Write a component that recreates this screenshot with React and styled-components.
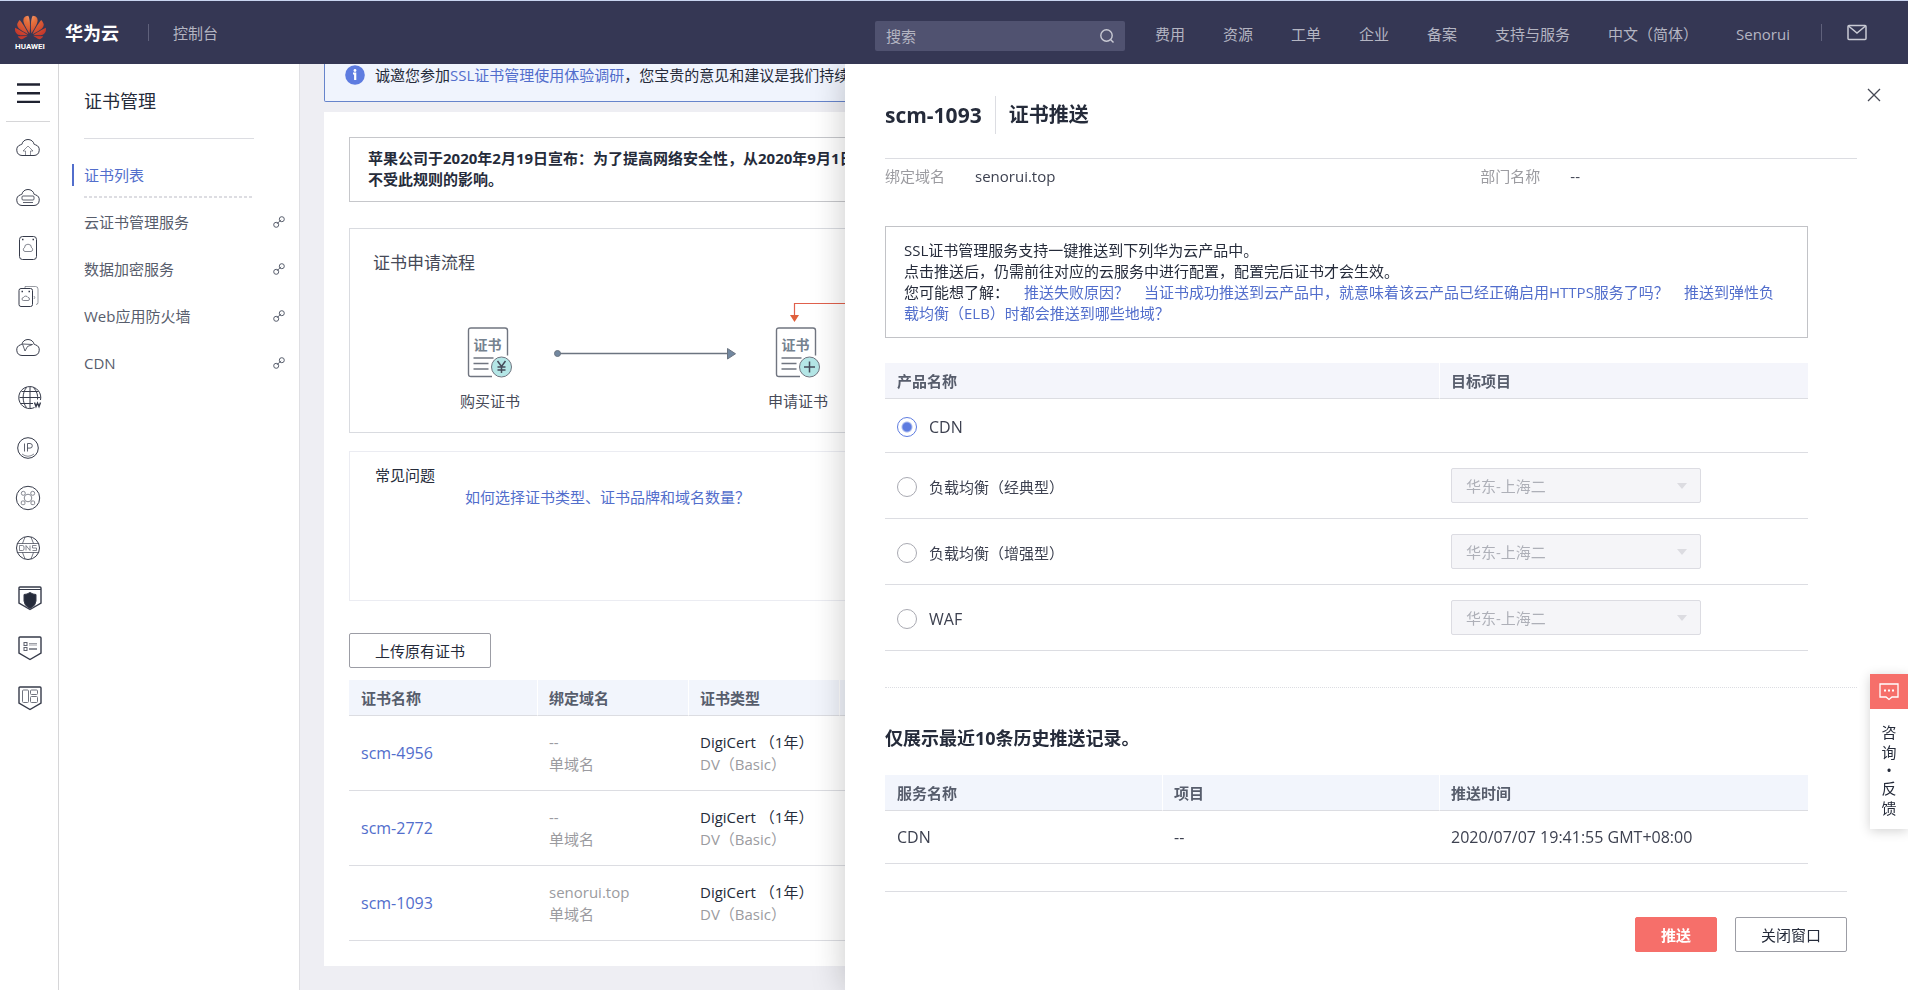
import React, { useState } from "react";
import styled, { createGlobalStyle, css } from "styled-components";

const color = {
  navy: "#353754",
  ink: "#252b3a",
  body: "#3d4150",
  soft: "#575d6c",
  mute: "#9b9ba0",
  link: "#526ecc",
  line: "#dcdde2",
  red: "#f66f6a",
};

const GlobalStyle = createGlobalStyle`
  * { box-sizing: border-box; }
  body {
    margin: 0;
    background: #eeeef3;
    color: ${color.ink};
    font: 15px/22px "Open Sans", "Noto Sans CJK SC", sans-serif;
  }
  button, input, select { font: inherit; color: inherit; }
  h1, h2, p, ul { margin: 0; padding: 0; }
  ul { list-style: none; }
  a { color: inherit; text-decoration: none; }
`;

/* ---------- page frame ---------- */

const Page = styled.div`
  display: flex;
  flex-direction: column;
  height: 100vh;
  overflow: hidden;
`;

const Header = styled.header`
  position: relative;
  z-index: 3;
  display: flex;
  align-items: center;
  flex: none;
  height: 64px;
  padding: 0 40px 0 14px;
  border-top: 1px solid #c9d4f0;
  background: ${color.navy};
  color: #b4b5c2;
`;

const Body = styled.div`
  display: flex;
  flex: 1;
  min-height: 0;
`;

/* ---------- header ---------- */

const Brand = styled.a`
  display: flex;
  align-items: center;
  gap: 18px;
  color: #fff;
  font-size: 18px;
  font-weight: 700;
`;

const Separator = styled.span`
  width: 1px;
  height: 17px;
  margin: 0 24px 0 ${(p) => p.$before}px;
  background: #5f617b;
`;

const Search = styled.label`
  display: flex;
  align-items: center;
  width: 250px;
  height: 30px;
  margin: 6px 30px 0 auto;
  padding: 0 10px 0 11px;
  border-radius: 2px;
  background: #505270;

  input {
    flex: 1;
    min-width: 0;
    padding: 0;
    border: 0;
    outline: 0;
    background: none;
  }
  input::placeholder { color: #b4b5c2; opacity: 1; }
`;

const TopNav = styled.nav`
  display: flex;
  align-items: center;
  gap: 38px;
  padding-top: 2px;
  white-space: nowrap;
`;

const IconButton = styled.button`
  display: flex;
  padding: 0;
  border: 0;
  background: none;
  cursor: pointer;
`;

function Logo() {
  const half = (
    <>
      <path d="M3.67 6.14S1.82 7.91 1.72 9.78v.35c.08 1.51 1.22 2.4 1.22 2.4 1.83 1.79 6.26 4.04 7.3 4.55 0 0 .06.03.1-.01l.02-.04v-.04C7.52 10.8 3.67 6.14 3.67 6.14z" />
      <path d="M9.65 18.6c-.02-.08-.1-.08-.1-.08l-7.38.26c.8 1.43 2.15 2.53 3.56 2.2.96-.25 3.16-1.78 3.88-2.3.06-.05.04-.08.04-.08z" />
      <path d="M9.73 17.82C6.49 15.63.21 12.28.21 12.28c-.15.46-.2.9-.21 1.3v.07c0 1.07.4 1.82.4 1.82.8 1.69 2.34 2.2 2.34 2.2.7.3 1.4.31 1.4.31.12.02 4.4 0 5.54 0 .05 0 .08-.05.08-.05v-.06c0-.03-.03-.05-.03-.05z" />
      <path d="M9.06 3.19a3.42 3.42 0 0 0-2.57 3.15v.41c.03.6.16 1.05.16 1.05.66 2.9 3.86 7.65 4.55 8.65.05.05.1.03.1.03a.1.1 0 0 0 .06-.1c1.06-10.6-1.11-13.42-1.11-13.42-.32.02-1.19.23-1.19.23z" />
    </>
  );
  return (
    <svg width="33" height="36" viewBox="0 0 33 36" aria-label="HUAWEI">
      <defs>
        <radialGradient id="petal" gradientUnits="userSpaceOnUse" cx="13" cy="3" r="17">
          <stop offset="0" stopColor="#f6a27a" />
          <stop offset="0.35" stopColor="#e5703c" />
          <stop offset="1" stopColor="#c63a2c" />
        </radialGradient>
      </defs>
      <g transform="translate(1 -3) scale(1.29)" fill="url(#petal)">
        {half}
        <g transform="translate(24 0) scale(-1 1)">{half}</g>
      </g>
      <text x="16" y="34" textAnchor="middle" fontSize="8" fontWeight="700" fill="#fff" fontFamily="Roboto, sans-serif">
        HUAWEI
      </text>
    </svg>
  );
}

/* ---------- icon rail ---------- */

const Rail = styled.nav`
  display: flex;
  flex-direction: column;
  align-items: center;
  flex: none;
  width: 59px;
  padding: 19px 2px 0 0;
  border-right: 1px solid #d6d6d8;
  background: #fff;
`;

const RailToggle = styled(IconButton)`
  justify-content: center;
  width: 44px;
  height: 39px;
  border-bottom: 1px solid #d6d6d8;
`;

const RailList = styled.ul`
  display: flex;
  flex-direction: column;
  gap: 22px;
  margin-top: 12px;

  a { display: block; height: 28px; }
  svg { overflow: visible; }
`;

const cloud = "M8 21.500a5.500 5.500 0 0 1-1.500-10.700c.6-.3 1-.2 1.300-.4C8.500 7.300 11 5.500 14 5.500s5.500 1.800 6.200 4.900c.3.200.7.100 1.300.4A5.500 5.500 0 0 1 20 21.500z";
const shield = "M6 3h20q1 0 1 1v15l-11 6.500L5 19V4q0-1 1-1z";

const railIcons = [
  ["云服务器", <><path d={cloud} /><path opacity=".55" d="M14 12l5 5h-2.500v4.500M14 12l-5 5h2.500v4.500" /></>],
  ["云硬盘", <><path d={cloud} /><rect opacity=".8" x="8" y="12" width="12" height="4" rx="1" /><path opacity=".8" d="M9 18.500h10" /></>],
  ["存储", <><rect x="5.500" y="2.500" width="17" height="23" rx="3" /><path strokeWidth="1.500" d="M8 5.500h1.500M18.500 5.500H20" /><path opacity=".6" d="M11 17.500a2 2 0 0 1-.5-3.800 3.500 3.500 0 0 1 7 0 2 2 0 0 1-.5 3.800z" /></>],
  ["存储库", <><path opacity=".5" d="M11 4V2.500h10.500q2.500 0 2.500 2.500v13.500q0 2-2 2" /><rect x="5" y="4.500" width="13.500" height="18" rx="2" /><path strokeWidth="1.500" d="M7.500 7.500H9M14.500 7.500H16" /><path opacity=".6" d="M9.500 16.500a1.500 1.500 0 0 1 0-3 2.500 2.500 0 0 1 4.500 0 1.500 1.500 0 0 1 0 3z" /><path opacity=".5" d="M20 12q1.500 1.500 0 3" /></>],
  ["专线", <><path d={cloud} /><path opacity=".8" d="M8.500 10l2.500 7M8.500 10l10 .5-5 2L11 17" /></>],
  ["广域网", <><path d="M20.500 23.500A11 11 0 1 1 26.500 16M5.500 13.500h21M7 19.500h12M7.500 7.500h17M16 2.500v22M12.500 3.500C8 9 8 18 12.500 23.500M19.500 3.500c3.500 4 4.500 8 4 12" /><path strokeWidth="1.400" d="M20.500 18.500l1.500 4 1.500-3.500 1.500 3.500 1.500-4" /></>],
  ["弹性公网", <><circle cx="14" cy="14" r="10.300" /><path opacity=".8" d="M10.500 9.500v8M13.500 17.500v-8h2.500a2.300 2.300 0 0 1 0 4.600h-2.500" /><path opacity=".6" d="M8 20q6 4.500 12 0" /></>],
  ["均衡", <><circle cx="14" cy="14" r="11.700" /><g opacity=".6"><circle cx="14" cy="14" r="3.800" /><circle cx="9.300" cy="9.300" r="2" /><circle cx="18.700" cy="9.300" r="2" /><rect x="7.300" y="17" width="3.600" height="3.600" rx="1" /><rect x="17" y="17" width="3.600" height="3.600" rx="1" /></g></>],
  ["域名解析", <><circle cx="14" cy="14" r="11.500" /><path opacity=".7" d="M3 9.500h22M3 18.500h22M11 3L8.500 9.500M17 3l2.500 6.500M8.500 18.500L11 25M19.500 18.500L17 25" /><path opacity=".6" d="M5.500 11.500h3q1.500 0 1.500 1.500v2q0 1.500-1.500 1.500h-3zM12 16.500v-5l4 5v-5M22.500 11.500H18.500v2.500h4v2.500h-4" /></>],
  ["证书", <><path strokeWidth="1.400" d={shield} /><path d="M5 5.500h22" /><path fill="#252b3a" d="M16 8.500q3 2 6 2V17q0 4.500-6 7.500-6-3-6-7.500v-6.500q3 0 6-2z" /></>],
  ["审计", <><path strokeWidth="1.400" d={shield} /><g opacity=".8"><rect x="10" y="8.500" width="3" height="3" /><rect x="10" y="13.500" width="3" height="3" /><path d="M15 9.500h8M15 11h8" opacity=".6" /><path strokeWidth="1.400" d="M15 15h8" /></g></>],
  ["防护", <><path strokeWidth="1.400" d={shield} /><g opacity=".7"><rect x="8.500" y="6" width="6" height="12.500" rx="1" /><rect x="16.500" y="6" width="7" height="4.500" rx="1" /><rect x="16.500" y="12.500" width="7" height="6" rx="1" /></g></>],
];

/* ---------- side menu ---------- */

const SideMenu = styled.nav`
  flex: none;
  width: 241px;
  padding: 25px 14px 0 0;
  border-right: 1px solid #dfdfe3;
  background: #fff;
`;

const SideTitle = styled.h2`
  margin: 0 31px 25px 25px;
  padding-bottom: 24px;
  border-bottom: 1px solid ${color.line};
  font-size: 18px;
  font-weight: 400;
  line-height: 25px;
`;

const SideItem = styled.a`
  display: flex;
  align-items: center;
  justify-content: space-between;
  height: 22px;
  margin-left: 25px;
  margin-bottom: 25px;
  color: ${color.soft};

  ${(p) =>
    p.$active &&
    css`
      margin-left: 13px;
      margin-bottom: 10px;
      padding-left: 10px;
      border-left: 2px solid ${color.link};
      color: ${color.link};
    `}
`;

const SideDash = styled.hr`
  height: 2px;
  margin: 0 31px 13px 25px;
  border: 0;
  background: repeating-linear-gradient(90deg, #dddde2 0 3px, #fff 3px 5px);
`;

function LinkIcon() {
  return (
    <svg width="12" height="14" viewBox="0 0 12 14" fill="none" stroke="#575d6c">
      <circle cx="3.200" cy="9.800" r="2.500" />
      <circle cx="8.800" cy="4.200" r="2.500" />
      <path d="M4 8.800l4-4" />
    </svg>
  );
}

/* ---------- main column ---------- */

const Main = styled.main`
  flex: 1;
  min-width: 0;
  padding: 0 24px;
  overflow: hidden;
`;

const Notice = styled.div`
  display: flex;
  align-items: center;
  gap: 10px;
  margin-bottom: 10px;
  padding: 0 20px 15px;
  border: solid #6684cb;
  border-width: 0 1px 1px;
  border-radius: 0 0 2px 2px;
  background: #f0f4fd;
  white-space: nowrap;

  a { color: ${color.link}; }
`;

const Card = styled.section`
  padding: 25px;
  background: #fff;
`;

const Bulletin = styled.p`
  margin-bottom: 26px;
  padding: 10px 18px 11px;
  border: 1px solid #c6c7cb;
  font-weight: 700;
  line-height: 21px;
  white-space: nowrap;
`;

const Process = styled.div`
  height: 205px;
  margin-bottom: 18px;
  padding: 23px;
  border: 1px solid #d9dbe0;
  overflow: hidden;
  color: #464a58;

  h2 { margin-bottom: 52px; font-size: 17px; font-weight: 400; }
`;

const Steps = styled.div`
  display: flex;
  gap: 32px;
  padding-left: 87px;
`;

const Step = styled.div`
  position: relative;
  display: flex;
  flex-direction: column;
  align-items: center;
  gap: 12px;
  width: 60px;
  white-space: nowrap;
`;

const ReturnLine = styled.svg`
  position: absolute;
  top: -25px;
  left: 22px;
`;

function Certificate({ children }) {
  return (
    <svg width="48" height="52" viewBox="0 0 48 52" fill="none" stroke="#707580">
      <path strokeWidth="1.400" d="M26 50.500H5q-2.500 0-2.500-2.500V4.500Q2.500 2 5 2h34q2.500 0 2.500 2.500v25" />
      <path strokeWidth="1.400" d="M7.500 32h20M7.500 37.500h15M7.500 43h15" />
      <text x="21.500" y="24" textAnchor="middle" fontSize="14" fontWeight="700" fill="#75828f" stroke="none">
        证书
      </text>
      <circle cx="35.500" cy="41" r="10" fill="#b4e6e6" />
      <g stroke="#454b5a" strokeWidth="1.500">{children}</g>
    </svg>
  );
}

const Faq = styled.div`
  height: 150px;
  margin-bottom: 32px;
  padding: 12px 25px;
  border: 1px solid #ebecf2;

  a { display: block; margin-left: 90px; color: ${color.link}; }
`;

const Button = styled.button`
  height: 35px;
  padding: 0 25px;
  border: 1px solid ${(p) => (p.$primary ? color.red : "#9c9da5")};
  border-radius: 2px;
  background: ${(p) => (p.$primary ? color.red : "#fff")};
  color: ${(p) => (p.$primary ? "#fff" : color.ink)};
  font-weight: ${(p) => (p.$primary ? 700 : 400)};
  cursor: pointer;
`;

const Table = styled.table`
  width: ${(p) => p.$width || "100%"};
  border-collapse: separate;
  border-spacing: 0;
  table-layout: fixed;
  text-align: left;

  th, td { padding: 0 0 0 12px; border-bottom: 1px solid ${color.line}; }
  th {
    height: 36px;
    background: #f2f5fc;
    color: ${color.soft};
    font-weight: 600;
  }
  th + th { padding-left: 11px; border-left: 1px solid #fff; }
  td { height: ${(p) => p.$row}px; }
`;

const CertTable = styled(Table)`
  margin-top: 12px;
  a { color: ${color.link}; }
`;

/* Latin-only names and timestamps run one size up beside the Chinese text */
const Latin = styled.span`
  font-size: 16px;
`;

const Muted = styled.div`
  color: ${color.mute};
`;

/* ---------- drawer ---------- */

const Drawer = styled.aside`
  position: fixed;
  z-index: 2;
  top: 64px;
  right: 0;
  bottom: 0;
  left: 845px;
  padding: 32px 51px 0 40px;
  background: #fff;
  box-shadow: 0 0 32px rgba(0, 0, 0, 0.22);
  overflow: hidden;
`;

const DrawerClose = styled(IconButton)`
  position: absolute;
  top: 24px;
  right: 27px;
`;

const DrawerTitle = styled.h1`
  display: flex;
  margin-bottom: 24px;
  font-size: 21px;
  font-weight: 700;
  line-height: 38px;

  span + span {
    margin-left: 13px;
    padding-left: 13px;
    border-left: 1px solid ${color.line};
    font-size: 20px;
  }
`;

const Facts = styled.dl`
  display: grid;
  grid-template-columns: 49fr 31fr;
  margin: 0 0 39px;
  padding-top: 6px;
  border-top: 1px solid ${color.line};

  div { display: flex; gap: 30px; }
  dt { color: ${color.mute}; }
  dd { margin: 0; color: ${color.body}; }
`;

const Tips = styled.div`
  width: 95%;
  margin-bottom: 25px;
  padding: 13px 19px 13px 18px;
  border: 1px solid #c2c3c7;
  line-height: 21px;

  a { margin-left: 15px; color: ${color.link}; }
`;

const ProductTable = styled(Table)`
  th { background: #f4f5fb; }
  th:first-child { width: 60%; }
  tr:first-child td { height: 54px; }
`;

const RadioLabel = styled.label`
  display: flex;
  align-items: center;
  gap: 12px;
  padding-top: 2px;
  color: ${color.body};
`;

const Radio = styled.input`
  width: 20px;
  height: 20px;
  margin: 0;
  appearance: none;
  border: 1px solid #a9aab2;
  border-radius: 50%;
  background: #fff;

  &:checked {
    border-color: #5e7ce0;
    background: radial-gradient(circle, #5e7ce0 0 4px, #fff 6px);
  }
`;

const SelectBox = styled.span`
  display: grid;
  align-items: center;
  width: 250px;

  select, svg { grid-area: 1 / 1; }
  svg { justify-self: end; margin-right: 14px; }
  select {
    height: 35px;
    padding: 0 14px;
    appearance: none;
    border: 1px solid #dcdce2;
    border-radius: 2px;
    background: #f5f5f8;
    color: #aeb0b8;
    opacity: 1;
  }
`;

const Dotted = styled.hr`
  margin: 36px 0 37px;
  border: 0;
  border-top: 1px dotted #dcdde2;
`;

const HistoryTitle = styled.h2`
  margin-bottom: 24px;
  font-size: 18px;
  font-weight: 700;
  line-height: 26px;
`;

const HistoryTable = styled(Table)`
  color: ${color.body};
  th:nth-child(-n + 2) { width: 30%; }
`;

const DrawerFooter = styled.footer`
  display: flex;
  justify-content: flex-end;
  gap: 18px;
  margin: 27px 10px 0 0;
  padding-top: 25px;
  border-top: 1px solid ${color.line};
`;

/* ---------- feedback tab ---------- */

const Feedback = styled.a`
  position: fixed;
  z-index: 4;
  top: 674px;
  right: 0;
  width: 38px;
  padding-bottom: 11px;
  background: #fff;
  box-shadow: 0 2px 12px rgba(0, 0, 0, 0.18);
  text-align: center;
  line-height: 20px;

  svg { display: block; margin-bottom: 13px; padding: 8px 9px; width: 100%; height: 35px; background: ${color.red}; }
  span { display: block; }
  i { display: block; font-style: normal; line-height: 16px; }
`;

/* ---------- data ---------- */

const topLinks = ["费用", "资源", "工单", "企业", "备案", "支持与服务", "中文（简体）", "Senorui"];
const sideLinks = ["云证书管理服务", "数据加密服务", "Web应用防火墙", "CDN"];
const certificates = [
  { name: "scm-4956", domain: "--" },
  { name: "scm-2772", domain: "--" },
  { name: "scm-1093", domain: "senorui.top" },
];
const products = [
  { name: "CDN", latin: true },
  { name: "负载均衡（经典型）", region: "华东-上海二" },
  { name: "负载均衡（增强型）", region: "华东-上海二" },
  { name: "WAF", latin: true, region: "华东-上海二" },
];

export default function App() {
  const [product, setProduct] = useState("CDN");

  return (
    <Page>
      <GlobalStyle />
      <Header>
        <Brand href="#">
          <Logo />
          华为云
        </Brand>
        <Separator $before={29} />
        <a href="#">控制台</a>
        <Search>
          <input type="text" placeholder="搜索" aria-label="搜索" />
          <svg width="16" height="16" viewBox="0 0 16 16" fill="none" stroke="#c9cad4" strokeWidth="1.400">
            <circle cx="7.500" cy="7.500" r="5.700" />
            <path d="M11.500 11.500l3 3" />
          </svg>
        </Search>
        <TopNav>
          {topLinks.map((t) => (
            <a href="#" key={t}>{t}</a>
          ))}
        </TopNav>
        <Separator $before={31} />
        <IconButton aria-label="消息">
          <svg width="22" height="18" viewBox="0 0 22 18" fill="none" stroke="#c9cad4" strokeWidth="1.500">
            <rect x="2" y="1.500" width="18" height="14" rx="1" />
            <path d="M2.500 2l8.500 7 8.500-7" />
          </svg>
        </IconButton>
      </Header>

      <Body>
        <Rail>
          <RailToggle aria-label="展开菜单">
            <svg width="23" height="20" viewBox="0 0 23 20" stroke="#1f2230" strokeWidth="2.500">
              <path d="M0 1.500h23M0 10.200h23M0 19h23" />
            </svg>
          </RailToggle>
          <RailList>
            {railIcons.map(([name, art]) => (
              <li key={name}>
                <a href="#" aria-label={name}>
                  <svg width="28" height="28" viewBox="0 0 28 28" fill="none" stroke="#363b4a">
                    {art}
                  </svg>
                </a>
              </li>
            ))}
          </RailList>
        </Rail>

        <SideMenu>
          <SideTitle>证书管理</SideTitle>
          <SideItem href="#" $active>证书列表</SideItem>
          <SideDash />
          {sideLinks.map((t) => (
            <SideItem href="#" key={t}>
              {t}
              <LinkIcon />
            </SideItem>
          ))}
        </SideMenu>

        <Main>
          <Notice>
            <svg width="20" height="22" viewBox="0 0 20 22">
              <circle cx="10" cy="11" r="9.800" fill="#5e7ce0" />
              <circle cx="10" cy="6.500" r="1.400" fill="#fff" />
              <path d="M8 9.500h2.200V16" fill="none" stroke="#fff" strokeWidth="2.200" />
            </svg>
            <span>
              诚邀您参加<a href="#">SSL证书管理使用体验调研</a>，您宝贵的意见和建议是我们持续
            </span>
          </Notice>
          <Card>
            <Bulletin>
              苹果公司于2020年2月19日宣布：为了提高网络安全性，从2020年9月1日
              <br />
              不受此规则的影响。
            </Bulletin>
            <Process>
              <h2>证书申请流程</h2>
              <Steps>
                <Step>
                  <Certificate>
                    <path fill="none" d="M31.500 35l4 5.500 4-5.500M35.500 40.500V47M31.500 41h8M31.500 44h8" />
                  </Certificate>
                  购买证书
                </Step>
                <svg width="184" height="52" viewBox="0 0 184 52" stroke="#6b7480">
                  <path strokeWidth="1.500" d="M5 27.500h170" />
                  <circle cx="5.500" cy="27.500" r="3" fill="#7288a0" />
                  <path d="M175.500 22.500v10.500l8-5.250z" fill="#7288a0" />
                </svg>
                <Step>
                  <ReturnLine width="400" height="22" viewBox="0 0 400 22">
                    <path d="M4.500 14V2.500H400" fill="none" stroke="#e0604c" strokeWidth="1.200" />
                    <path d="M0 14h9l-4.500 7z" fill="#e0603c" />
                  </ReturnLine>
                  <Certificate>
                    <path d="M35.500 35.500v11M30 41h11" />
                  </Certificate>
                  申请证书
                </Step>
              </Steps>
            </Process>
            <Faq>
              <div>常见问题</div>
              <a href="#">如何选择证书类型、证书品牌和域名数量？</a>
            </Faq>
            <Button>上传原有证书</Button>
            <CertTable $row={75}>
              <colgroup>
                <col width="188" />
                <col width="151" />
                <col width="151" />
                <col />
              </colgroup>
              <thead>
                <tr>
                  <th>证书名称</th>
                  <th>绑定域名</th>
                  <th>证书类型</th>
                  <th />
                </tr>
              </thead>
              <tbody>
                {certificates.map((c) => (
                  <tr key={c.name}>
                    <td><a href="#"><Latin>{c.name}</Latin></a></td>
                    <td>
                      <Muted>{c.domain}</Muted>
                      <Muted>单域名</Muted>
                    </td>
                    <td>
                      DigiCert （1年）
                      <Muted>DV（Basic）</Muted>
                    </td>
                    <td />
                  </tr>
                ))}
              </tbody>
            </CertTable>
          </Card>
        </Main>
      </Body>

      <Drawer>
        <DrawerClose aria-label="关闭">
          <svg width="14" height="14" viewBox="0 0 14 14" stroke="#454854" strokeWidth="1.300">
            <path d="M1 1l12 12M13 1L1 13" />
          </svg>
        </DrawerClose>
        <DrawerTitle>
          <span>scm-1093</span>
          <span>证书推送</span>
        </DrawerTitle>
        <Facts>
          <div>
            <dt>绑定域名</dt>
            <dd>senorui.top</dd>
          </div>
          <div>
            <dt>部门名称</dt>
            <dd>--</dd>
          </div>
        </Facts>
        <Tips>
          <p>SSL证书管理服务支持一键推送到下列华为云产品中。</p>
          <p>点击推送后，仍需前往对应的云服务中进行配置，配置完后证书才会生效。</p>
          <p>
            您可能想了解：<a href="#">推送失败原因？</a>
            <a href="#">当证书成功推送到云产品中，就意味着该云产品已经正确启用HTTPS服务了吗？</a>
            <a href="#">推送到弹性负载均衡（ELB）时都会推送到哪些地域？</a>
          </p>
        </Tips>
        <ProductTable $width="95%" $row={66}>
          <thead>
            <tr>
              <th>产品名称</th>
              <th>目标项目</th>
            </tr>
          </thead>
          <tbody>
            {products.map((p) => (
              <tr key={p.name}>
                <td>
                  <RadioLabel>
                    <Radio
                      type="radio"
                      name="product"
                      checked={product === p.name}
                      onChange={() => setProduct(p.name)}
                    />
                    {p.latin ? <Latin>{p.name}</Latin> : p.name}
                  </RadioLabel>
                </td>
                <td>
                  {p.region && (
                    <SelectBox>
                      <select disabled aria-label={p.name + "目标项目"}>
                        <option>{p.region}</option>
                      </select>
                      <svg width="10" height="6" viewBox="0 0 10 6">
                        <path d="M0 0h10L5 6z" fill="#dcdce1" />
                      </svg>
                    </SelectBox>
                  )}
                </td>
              </tr>
            ))}
          </tbody>
        </ProductTable>
        <Dotted />
        <HistoryTitle>仅展示最近10条历史推送记录。</HistoryTitle>
        <HistoryTable $width="95%" $row={53}>
          <thead>
            <tr>
              <th>服务名称</th>
              <th>项目</th>
              <th>推送时间</th>
            </tr>
          </thead>
          <tbody>
            <tr>
              <td><Latin>CDN</Latin></td>
              <td><Latin>--</Latin></td>
              <td><Latin>2020/07/07 19:41:55 GMT+08:00</Latin></td>
            </tr>
          </tbody>
        </HistoryTable>
        <DrawerFooter>
          <Button $primary>推送</Button>
          <Button>关闭窗口</Button>
        </DrawerFooter>
      </Drawer>

      <Feedback href="#">
        <svg viewBox="0 0 20 19" fill="none" stroke="#fff" strokeWidth="1.300">
          <path d="M1 2h18v13h-6l-3 2.500L7 15H1z" />
          <path strokeWidth="2" d="M5 8.500h2M9 8.500h2M13 8.500h2" />
        </svg>
        <span>咨</span>
        <span>询</span>
        <i>•</i>
        <span>反</span>
        <span>馈</span>
      </Feedback>
    </Page>
  );
}
